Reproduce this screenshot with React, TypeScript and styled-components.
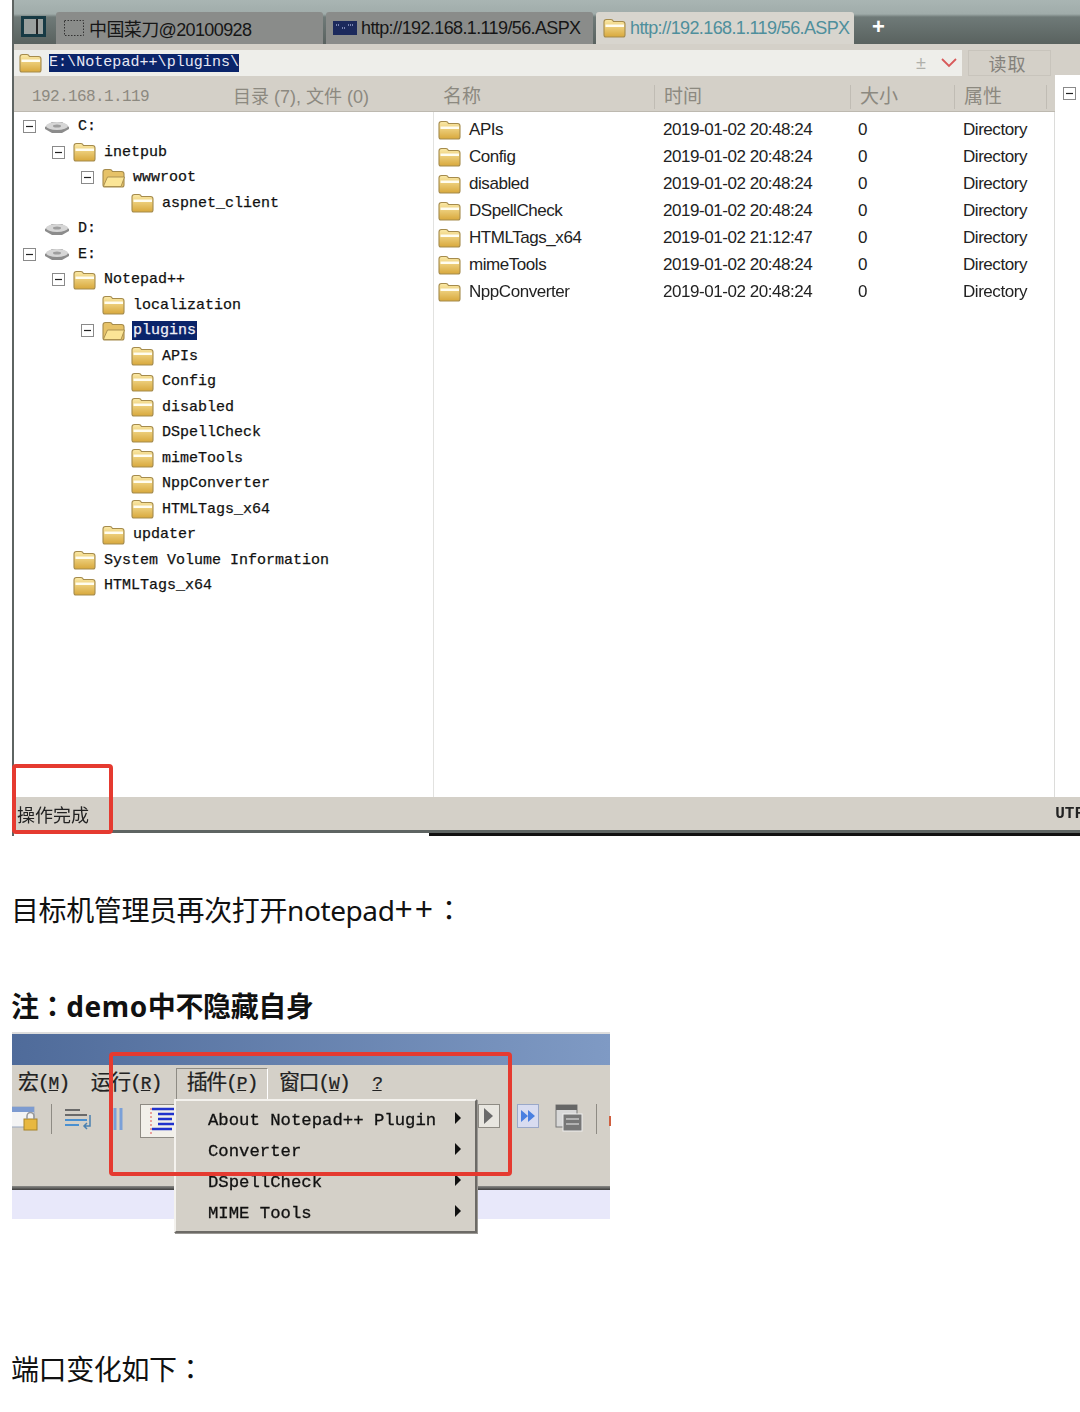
import React from 'react';
import styled, { createGlobalStyle } from 'styled-components';

const cjk = '"Noto Sans CJK SC"';
const ui = `"Liberation Sans", ${cjk}, sans-serif`;
const mono = `"Liberation Mono", ${cjk}, monospace`;

const Global = createGlobalStyle`
  html, body { margin: 0; padding: 0; background: #fff; }
  body { font-family: "Noto Sans", ${cjk}, sans-serif; }
`;

const Page = styled.div`
  width: 1080px;
  height: 1412px;
  overflow: hidden;
  padding-left: 12px;
  box-sizing: border-box;
`;

const Shot = styled.div`
  position: relative;
  width: 1068px;
  height: 836px;
  display: flex;
  flex-direction: column;
  box-sizing: border-box;
  border-left: 2px solid #5e6462;
  background: #d4d0c8;
  filter: blur(0.45px);
`;

const TabStrip = styled.div`
  height: 44px;
  flex: none;
  display: flex;
  align-items: flex-end;
  padding-left: 7px;
  box-sizing: border-box;
  background: linear-gradient(#a9b5b3 0, #a0acaa 14px, #6f7a78 17px, #59625f 44px);
`;

const Toggle = styled.div`
  width: 25px;
  height: 21px;
  margin: 0 10px 7px 0;
  box-sizing: border-box;
  border: 3px solid #173a44;
  background: linear-gradient(90deg, #9aa09e 62%, #222 62%, #222 74%, #9aa09e 74%);
`;

const Tab = styled.div<{ $w: number; $active?: boolean }>`
  width: ${p => p.$w}px;
  height: 32px;
  flex: none;
  margin-right: 3px;
  display: flex;
  align-items: center;
  gap: 4px;
  padding-left: 7px;
  box-sizing: border-box;
  border-radius: 3px 3px 0 0;
  background: ${p => (p.$active ? '#d8d5ce' : '#8a8c8a')};
  color: ${p => (p.$active ? '#4f8f9c' : '#161616')};
  font: 18px ${ui};
  letter-spacing: -0.62px;
  white-space: nowrap;
  overflow: hidden;
`;

const NewTab = styled.span`
  margin: 0 0 3px 15px;
  color: #fff;
  font: bold 22px ${ui};
  line-height: 28px;
`;

const AddressRow = styled.div`
  height: 34px;
  flex: none;
  display: flex;
  align-items: stretch;
  padding: 6px 0 2px 0;
  box-sizing: border-box;
`;

const AddressBox = styled.div`
  width: 948px;
  display: flex;
  align-items: center;
  gap: 7px;
  padding-left: 5px;
  box-sizing: border-box;
  background: #eeeeea;
`;

const Path = styled.span`
  background: #0a246a;
  color: #e8e8f4;
  font: 15px/18px ${mono};
  letter-spacing: 0.05px;
`;

const AddressTools = styled.span`
  margin-left: auto;
  display: flex;
  align-items: center;
  gap: 15px;
  padding-right: 5px;
  color: #b0b0aa;
  font: 18px ${ui};
`;

const ReadButton = styled.div`
  width: 83px;
  margin-left: 6px;
  padding-right: 4px;
  display: flex;
  align-items: center;
  justify-content: center;
  border: 1px solid #c8c4bc;
  box-sizing: border-box;
  color: #85827c;
  font: 18px ${ui};
  letter-spacing: 1px;
`;

const Header = styled.div`
  height: 34px;
  flex: none;
  display: grid;
  grid-template-columns: 420px 221px 196px 104px 100px 1fr;
  align-items: center;
  padding-top: 4px;
  border-bottom: 1px solid #bdb9b0;
  box-sizing: border-box;
  color: #8c8980;
  font: 19px ${ui};
`;

const HeaderLeft = styled.div`
  display: flex;
  align-items: center;
  height: 24px;
  padding-left: 18px;
  font-size: 18px;
  line-height: 24px;
`;

const HostName = styled.span`
  width: 201px;
  font: 16px ${mono};
  line-height: 24px;
  letter-spacing: -0.6px;
`;

const HeaderCell = styled.div<{ $tail?: boolean }>`
  height: 24px;
  line-height: 24px;
  padding-left: 9px;
  border-right: 1px solid #c0bcb4;
  margin-right: ${p => (p.$tail ? 8 : 0)}px;
`;

const RightGap = styled.div`
  align-self: stretch;
  margin-top: -7px;
  margin-bottom: -1px;
  background: #fff;
  display: flex;
  align-items: center;
  padding-left: 8px;
`;

const Panes = styled.div`
  flex: 1;
  display: grid;
  grid-template-columns: 420px 621px 1fr;
  min-height: 0;
  background: #fff;
`;

const TreePane = styled.div`
  padding-top: 2px;
  border-right: 1px solid #e2e2e0;
`;

const TreeRow = styled.div<{ $level: number }>`
  height: 25.5px;
  display: flex;
  align-items: center;
  padding-left: ${p => 9 + p.$level * 29}px;
  color: #111;
  font: 15px ${mono};
  -webkit-text-stroke: 0.25px #111;
  white-space: nowrap;
`;

const Slot = styled.span`
  width: 21px;
  flex: none;
  display: flex;
  align-items: center;
`;

const TreeLabel = styled.span<{ $selected?: boolean }>`
  margin-left: 7px;
  padding: 1px 1px;
  background: ${p => (p.$selected ? '#0a246a' : 'transparent')};
  color: ${p => (p.$selected ? '#f0f0f8' : '#111')};
  -webkit-text-stroke-color: ${p => (p.$selected ? '#f0f0f8' : '#111')};
`;

const ListPane = styled.div`
  padding-top: 4px;
  border-right: 1px solid #dcdcda;
`;

const FileRow = styled.div`
  height: 27px;
  display: grid;
  grid-template-columns: 225px 195px 105px 1fr;
  align-items: center;
  padding-left: 4px;
  color: #222;
  font: 17px ${ui};
  letter-spacing: -0.45px;
  white-space: nowrap;
`;

const FileName = styled.span`
  display: flex;
  align-items: center;
  gap: 8px;
`;

const StatusBar = styled.div`
  height: 33px;
  flex: none;
  display: flex;
  align-items: center;
  justify-content: space-between;
  padding-left: 3px;
  color: #222;
  font: 18px ${ui};
`;

const Utf = styled.span`
  margin-right: -4px;
  font: bold 16px ${mono};
`;

const ShotBase = styled.div`
  height: 6px;
  flex: none;
  background:
    linear-gradient(#5e6462, #5e6462) top / 100% 3px no-repeat,
    linear-gradient(#111, #111) 415px 100% / 100% 3px no-repeat,
    #fff;
`;

const RedBox = styled.div<{ $l: number; $t: number; $w: number; $h: number }>`
  position: absolute;
  left: ${p => p.$l}px;
  top: ${p => p.$t}px;
  width: ${p => p.$w}px;
  height: ${p => p.$h}px;
  box-sizing: border-box;
  border: 4px solid #e53a30;
  border-radius: 4px;
  z-index: 3;
`;

const Line = styled.p<{ $top: number; $bold?: boolean }>`
  margin: ${p => p.$top}px 0 0 -1px;
  height: 40px;
  color: #111;
  font-size: 28px;
  line-height: 40px;
  font-weight: ${p => (p.$bold ? 700 : 400)};
  letter-spacing: -0.4px;
  white-space: nowrap;
`;

// fullwidth colon sits centred in the TC face, as in the reference
const Colon = styled.span`
  font-family: "Noto Sans CJK TC", sans-serif;
`;

const Latin = styled.span<{ $spacing: number }>`
  letter-spacing: ${p => p.$spacing}px;
`;

const Plus = styled.span`
  font-size: 32px;
  line-height: 32px;
  letter-spacing: 2px;
`;

const MenuShot = styled.div`
  position: relative;
  width: 598px;
  height: 187px;
  margin-top: 7px;
  display: flex;
  flex-direction: column;
  filter: blur(0.45px);
`;

const TitleBar = styled.div`
  height: 33px;
  flex: none;
  background: linear-gradient(90deg, #4f6b9a, #7f9ac4);
  border-top: 2px solid #ddd;
  box-sizing: border-box;
`;

const MenuBar = styled.div`
  height: 36px;
  flex: none;
  display: flex;
  align-items: center;
  padding: 2px 0 0 6px;
  box-sizing: border-box;
  background: #d4d0c8;
  color: #222;
  font: 21px ${mono};
  -webkit-text-stroke: 0.2px #222;
`;

const MenuItem = styled.span<{ $w: number; $gap?: number; $open?: boolean }>`
  width: ${p => p.$w}px;
  height: 32px;
  margin-left: ${p => p.$gap ?? 0}px;
  line-height: 32px;
  flex: none;
  text-align: center;
  box-sizing: border-box;
  white-space: nowrap;
  letter-spacing: -1.5px;
  ${p => (p.$open ? 'border: 1px solid; border-color: #8e8b84 #fff #fff #8e8b84; line-height: 30px;' : '')}
`;

const Under = styled.span`
  text-decoration: underline;
  font-size: 18px;
`;

const ToolBar = styled.div`
  height: 85px;
  flex: none;
  display: flex;
  align-items: flex-start;
  background: #d4d0c8;
  padding-top: 3px;
  box-sizing: border-box;
`;

const ToolIcon = styled.svg<{ $gap: number }>`
  flex: none;
  margin-left: ${p => p.$gap}px;
`;

const Rule = styled.div`
  height: 4px;
  flex: none;
  background: linear-gradient(#8a8a88, #3e3e3e);
`;

const Lavender = styled.div`
  flex: 1;
  background: #e8e8fa;
`;

const Popup = styled.div`
  position: absolute;
  left: 162px;
  top: 67px;
  width: 303px;
  height: 134px;
  padding-top: 4px;
  box-sizing: border-box;
  background: #d4d0c8;
  border: 2px solid;
  border-color: #f4f2ee #6c6a66 #6c6a66 #f4f2ee;
  box-shadow: 1px 1px 0 #9a9894;
  z-index: 2;
`;

const PopupItem = styled.div`
  height: 31px;
  display: flex;
  align-items: center;
  justify-content: space-between;
  padding: 0 14px 0 32px;
  color: #111;
  font: 17.3px ${mono};
  -webkit-text-stroke: 0.3px #111;
  white-space: pre;
`;

const Arrow = styled.span`
  width: 0;
  height: 0;
  margin-top: -6px;
  border-left: 6px solid #111;
  border-top: 6px solid transparent;
  border-bottom: 6px solid transparent;
`;

const FolderSvg = styled.svg`
  flex: none;
`;

const Folder: React.FC<{ open?: boolean; gid?: string }> = ({ open, gid = 'fold' }) => (
  <FolderSvg width="23" height="20" viewBox="0 0 23 20">
    <defs>
      <linearGradient id={gid} x1="0" y1="0" x2="0" y2="1">
        <stop offset="0" stopColor="#fbeaa8" />
        <stop offset="1" stopColor="#d8a83c" />
      </linearGradient>
    </defs>
    <path d="M1 17V4Q1 1.500 3.500 1.500H8Q9.500 1.500 10.500 3.500H19.500Q22 3.500 22 6V17Q22 19 20 19H3Q1 19 1 17z" fill={open ? '#e6c268' : `url(#${gid})`} stroke="#a58b4c" strokeWidth="1.100" />
    {open ? (
      <path d="M1.500 18L5.500 9H22.500L19 18.500H3z" fill="#fbe596" stroke="#a58b4c" strokeWidth="0.900" />
    ) : (
      <path d="M2.500 6.500h18.500V9H2.500z" fill="#fffdf0" />
    )}
  </FolderSvg>
);

const Drive = () => (
  <svg width="26" height="14" viewBox="0 0 26 14">
    <path d="M1 7 8 2h10l7 5v2l-7 4H8L1 9z" fill="#8c8c8c" />
    <ellipse cx="13" cy="6" rx="11" ry="4" fill="#d6d6d6" />
    <ellipse cx="13" cy="6" rx="4" ry="1.500" fill="#9e9e9e" />
  </svg>
);

const Expander = () => (
  <svg width="13" height="13" viewBox="0 0 13 13">
    <rect x="0.500" y="0.500" width="12" height="12" fill="#fff" stroke="#8a8a8a" />
    <path d="M3 6.500h7" stroke="#222" strokeWidth="1.200" />
  </svg>
);

type Node = { level: number; label: string; icon: 'closed' | 'open' | 'drive'; toggle?: boolean; selected?: boolean };

const tree: Node[] = [
  { level: 0, label: 'C:', icon: 'drive', toggle: true },
  { level: 1, label: 'inetpub', icon: 'closed', toggle: true },
  { level: 2, label: 'wwwroot', icon: 'open', toggle: true },
  { level: 3, label: 'aspnet_client', icon: 'closed' },
  { level: 0, label: 'D:', icon: 'drive' },
  { level: 0, label: 'E:', icon: 'drive', toggle: true },
  { level: 1, label: 'Notepad++', icon: 'closed', toggle: true },
  { level: 2, label: 'localization', icon: 'closed' },
  { level: 2, label: 'plugins', icon: 'open', toggle: true, selected: true },
  { level: 3, label: 'APIs', icon: 'closed' },
  { level: 3, label: 'Config', icon: 'closed' },
  { level: 3, label: 'disabled', icon: 'closed' },
  { level: 3, label: 'DSpellCheck', icon: 'closed' },
  { level: 3, label: 'mimeTools', icon: 'closed' },
  { level: 3, label: 'NppConverter', icon: 'closed' },
  { level: 3, label: 'HTMLTags_x64', icon: 'closed' },
  { level: 2, label: 'updater', icon: 'closed' },
  { level: 1, label: 'System Volume Information', icon: 'closed' },
  { level: 1, label: 'HTMLTags_x64', icon: 'closed' },
];

const files = [
  ['APIs', '2019-01-02 20:48:24'],
  ['Config', '2019-01-02 20:48:24'],
  ['disabled', '2019-01-02 20:48:24'],
  ['DSpellCheck', '2019-01-02 20:48:24'],
  ['HTMLTags_x64', '2019-01-02 21:12:47'],
  ['mimeTools', '2019-01-02 20:48:24'],
  ['NppConverter', '2019-01-02 20:48:24'],
];

const Toolbar = () => (
  <ToolBar>
    <ToolIcon $gap={0} width="27" height="30" viewBox="0 0 27 30">
      <rect x="-4" y="3" width="26" height="20" fill="#f4f4f4" stroke="#9aa8c0" />
      <rect x="-4" y="3" width="26" height="5" fill="#7d9bd0" />
      <rect x="12" y="15" width="13" height="11" fill="#e8b840" stroke="#a88428" />
      <path d="M15 15v-3a3.500 3.500 0 0 1 7 0v3" fill="none" stroke="#999" strokeWidth="1.500" />
    </ToolIcon>
    <ToolIcon $gap={12} width="2" height="30" viewBox="0 0 2 30">
      <path d="M0 0v30" stroke="#8e8b84" strokeWidth="2" />
    </ToolIcon>
    <ToolIcon $gap={11} width="30" height="30" viewBox="0 0 30 30">
      <path d="M1 6h15M1 11h22" stroke="#6a6a6a" strokeWidth="2" />
      <path d="M1 16h22M1 21h14" stroke="#4a90d0" strokeWidth="2" />
      <path d="M26 11v11h-6m3-3-3 3 3 3" fill="none" stroke="#4a80b0" strokeWidth="1.500" />
    </ToolIcon>
    <ToolIcon $gap={18} width="12" height="30" viewBox="0 0 12 30">
      <path d="M3 4v22M9 4v22" stroke="#7aa0d8" strokeWidth="3" />
    </ToolIcon>
    <ToolIcon $gap={16} width="36" height="34" viewBox="0 0 36 34">
      <rect x="0.500" y="0.500" width="35" height="33" fill="#f2f0ea" stroke="#8e8b84" />
      <path d="M12 5h22M18 10h16M18 15h14M18 20h16M12 25h20" stroke="#2233cc" strokeWidth="2.500" />
      <path d="M11 4v26" stroke="#e05050" strokeWidth="1" strokeDasharray="2 2" />
    </ToolIcon>
    <ToolIcon $gap={302} width="22" height="24" viewBox="0 0 22 24">
      <rect x="0.500" y="0.500" width="21" height="23" fill="#e8e6e0" stroke="#8e8b84" />
      <path d="M6 4l9 8-9 8z" fill="#6a6a6a" />
    </ToolIcon>
    <ToolIcon $gap={17} width="22" height="24" viewBox="0 0 22 24">
      <rect x="0.500" y="0.500" width="21" height="23" fill="#d8dcf0" stroke="#9aa8c8" />
      <path d="M4 6l7 6-7 6zM11 6l7 6-7 6z" fill="#4a80e0" />
    </ToolIcon>
    <ToolIcon $gap={16} width="29" height="30" viewBox="0 0 29 30">
      <rect x="1" y="1" width="21" height="22" fill="#d8d8d8" stroke="#777" />
      <rect x="1" y="1" width="21" height="5" fill="#666" />
      <rect x="8" y="10" width="19" height="17" fill="#777" stroke="#eee" />
      <path d="M11 15h13M11 20h13" stroke="#eee" />
    </ToolIcon>
    <ToolIcon $gap={12} width="2" height="30" viewBox="0 0 2 30">
      <path d="M0 0v30" stroke="#8e8b84" strokeWidth="2" />
    </ToolIcon>
    <ToolIcon $gap={11} width="3" height="30" viewBox="0 0 3 30">
      <path d="M1 12v10" stroke="#d06040" strokeWidth="2" />
    </ToolIcon>
  </ToolBar>
);

export default function App() {
  return (
    <Page>
      <Global />
      <Shot>
        <TabStrip>
          <Toggle />
          <Tab $w={267}>
            <svg width="22" height="20" viewBox="0 0 22 20">
              <rect x="1.500" y="2.500" width="19" height="15" fill="none" stroke="#333" strokeDasharray="1.500 1.500" />
            </svg>
            <span>中国菜刀@20100928</span>
          </Tab>
          <Tab $w={267}>
            <svg width="24" height="18" viewBox="0 0 24 18">
              <rect x="0" y="2" width="24" height="14" fill="#1c2a5c" />
              <path d="M3 6h4M9 9h3M15 6h5" stroke="#9aa6d0" strokeWidth="1.500" strokeDasharray="1 1" />
            </svg>
            <span>http://192.168.1.119/56.ASPX</span>
          </Tab>
          <Tab $w={258} $active>
            <Folder gid="fold-tab" />
            <span>http://192.168.1.119/56.ASPX</span>
          </Tab>
          <NewTab>+</NewTab>
        </TabStrip>
        <AddressRow>
          <AddressBox>
            <Folder gid="fold-addr" />
            <Path>E:\Notepad++\plugins\</Path>
            <AddressTools>
              <span>±</span>
              <svg width="16" height="10" viewBox="0 0 16 10">
                <path d="M1 1l7 7 7-7" fill="none" stroke="#d85a5a" strokeWidth="1.800" />
              </svg>
            </AddressTools>
          </AddressBox>
          <ReadButton>读取</ReadButton>
        </AddressRow>
        <Header>
          <HeaderLeft>
            <HostName>192.168.1.119</HostName>
            <span>目录 (7), 文件 (0)</span>
          </HeaderLeft>
          <HeaderCell>名称</HeaderCell>
          <HeaderCell>时间</HeaderCell>
          <HeaderCell>大小</HeaderCell>
          <HeaderCell $tail>属性</HeaderCell>
          <RightGap>
            <Expander />
          </RightGap>
        </Header>
        <Panes>
          <TreePane>
            {tree.map((node, i) => (
              <TreeRow key={node.label + node.level} $level={node.level}>
                <Slot>{node.toggle && <Expander />}</Slot>
                {node.icon === 'drive' ? <Drive /> : <Folder open={node.icon === 'open'} gid={`fold-t${i}`} />}
                <TreeLabel $selected={node.selected}>{node.label}</TreeLabel>
              </TreeRow>
            ))}
          </TreePane>
          <ListPane>
            {files.map(([name, time], i) => (
              <FileRow key={name}>
                <FileName>
                  <Folder gid={`fold-l${i}`} />
                  {name}
                </FileName>
                <span>{time}</span>
                <span>0</span>
                <span>Directory</span>
              </FileRow>
            ))}
          </ListPane>
          <div />
        </Panes>
        <StatusBar>
          <span>操作完成</span>
          <Utf>UTF</Utf>
        </StatusBar>
        <ShotBase />
        <RedBox $l={-2} $t={764} $w={101} $h={70} />
      </Shot>
      <Line $top={53}>
        目标机管理员再次打开notepad<Plus>++</Plus><Colon>：</Colon>
      </Line>
      <Line $top={56} $bold>
        注<Colon>：</Colon><Latin $spacing={0.6}>demo</Latin>中不隐藏自身
      </Line>
      <MenuShot>
        <TitleBar />
        <MenuBar>
          <MenuItem $w={50}>宏(<Under>M</Under>)</MenuItem>
          <MenuItem $w={72} $gap={22}>运行(<Under>R</Under>)</MenuItem>
          <MenuItem $w={92} $gap={14} $open>插件(<Under>P</Under>)</MenuItem>
          <MenuItem $w={70} $gap={11}>窗口(<Under>W</Under>)</MenuItem>
          <MenuItem $w={14} $gap={21}><Under>?</Under></MenuItem>
        </MenuBar>
        <Toolbar />
        <Rule />
        <Lavender />
        <Popup>
          <PopupItem>About Notepad++ Plugin<Arrow /></PopupItem>
          <PopupItem>Converter<Arrow /></PopupItem>
          <PopupItem>DSpellCheck<Arrow /></PopupItem>
          <PopupItem>MIME Tools<Arrow /></PopupItem>
        </Popup>
        <RedBox $l={97} $t={20} $w={403} $h={124} />
      </MenuShot>
      <Line $top={129}>
        端口变化如下<Colon>：</Colon>
      </Line>
    </Page>
  );
}
